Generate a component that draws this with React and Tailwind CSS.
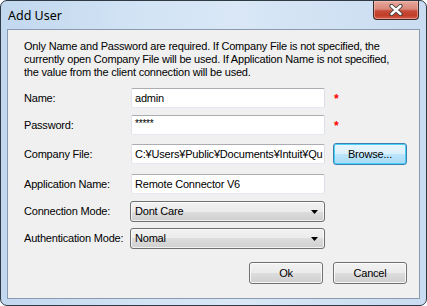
import React from "react";

const F = { fontFamily: '"Liberation Sans", Arial, sans-serif' };

function TextBox({ value, className = "" }) {
  return (
    <div
      className={
        "h-[20px] w-[194px] bg-white border border-[#abadb3] border-b-[#e3e9ef] border-l-[#e2e3ea] border-r-[#dbdfe6] rounded-[2px] flex items-center pl-[3px] overflow-hidden whitespace-nowrap text-[11px] text-black " +
        className
      }
    >
      {value}
    </div>
  );
}

function Combo({ value }) {
  return (
    <div className="h-[21px] w-[195px] ml-[-1px] rounded-[3px] border border-[#707070] bg-[linear-gradient(#f2f2f2_0%,#ebebeb_50%,#dddddd_50%,#cfcfcf_100%)] flex items-center pl-[4px] pr-[6px] text-[11px] text-black shadow-[inset_0_0_0_1px_rgba(255,255,255,0.7)]">
      <span className="flex-1">{value}</span>
      <svg width="7" height="4" viewBox="0 0 7 4">
        <path d="M0 0H7L3.5 4Z" fill="#000" />
      </svg>
    </div>
  );
}

function Btn({ children, focused = false, className = "" }) {
  return (
    <div
      className={
        "h-[22px] w-[74px] rounded-[3px] border flex items-center justify-center text-[11px] text-black " +
        (focused
          ? "border-[#3c7fb1] bg-[linear-gradient(#eaf6fd_0%,#d9f0fc_50%,#bee6fd_50%,#a7d9f5_100%)] shadow-[inset_0_0_0_1px_#48d0f7]"
          : "border-[#707070] bg-[linear-gradient(#f2f2f2_0%,#ebebeb_50%,#dddddd_50%,#cfcfcf_100%)] shadow-[inset_0_0_0_1px_rgba(255,255,255,0.8)]") +
        " " +
        className
      }
    >
      {children}
    </div>
  );
}

function Star() {
  return <span className="text-[#ff0000] text-[12px] font-bold leading-none ml-[9px] mt-[2px]">*</span>;
}

function Label({ children }) {
  return <div className="w-[107px] text-[11px] text-black">{children}</div>;
}

export default function App() {
  return (
    <div
      style={F}
      className="w-[427px] h-[306px] rounded-[7px] border border-[#2f3a45] bg-[linear-gradient(90deg,#c2d8ef_0%,#d3e4f5_35%,#d9e7f6_55%,#c9dcf1_100%)] flex flex-col overflow-hidden"
    >
      <div className="h-[28px] flex items-start shrink-0">
        <div className="pl-[7px] pt-[6px] text-[12.5px] text-black" style={{ fontFamily: '"Noto Sans", "Liberation Sans", sans-serif' }}>
          Add User
        </div>
        <div className="ml-auto mr-[7px] w-[46px] h-[19px] rounded-b-[4px] border border-t-0 border-[#3c2a2a] bg-[linear-gradient(#e7a99d_0%,#d9887a_45%,#c64b38_55%,#c23d2a_80%,#d4614b_100%)] flex items-center justify-center shadow-[inset_0_0_0_1px_rgba(255,200,190,0.5)]">
          <svg width="14" height="12" viewBox="0 0 14 12">
            <path d="M2.5 2L11.5 10M11.5 2L2.5 10" stroke="#3a3a3a" strokeWidth="4.2" strokeLinecap="round" />
            <path d="M2.5 2L11.5 10M11.5 2L2.5 10" stroke="#ffffff" strokeWidth="2.4" strokeLinecap="round" />
          </svg>
        </div>
      </div>
      <div className="mx-[6px] h-[270px] border border-[#8a9bb0] bg-[#f0f0f0] flex flex-col shrink-0 text-[11px] text-black tracking-[-0.2px]">
        <div className="mt-[10px] pl-[16px] pr-[20px] leading-[13px] h-[39px]">
          Only Name and Password are required. If Company File is not specified, the currently open Company File will be used. If Application Name is not specified, the value from the client connection will be used.
        </div>
        <div className="pl-[16px] flex flex-col">
          <div className="mt-[9px] flex items-center">
            <Label>Name:</Label>
            <TextBox value="admin" />
            <Star />
          </div>
          <div className="mt-[7px] flex items-center">
            <Label>Password:</Label>
            <TextBox value={<span className="text-[10px] mt-[-3px]">*****</span>} />
            <Star />
          </div>
          <div className="mt-[8px] flex items-center">
            <Label>Company File:</Label>
            <TextBox value="C:¥Users¥Public¥Documents¥Intuit¥Qu" />
            <Btn focused className="ml-[8px] w-[73px]">Browse...</Btn>
          </div>
          <div className="mt-[9px] flex items-center">
            <Label>Application Name:</Label>
            <TextBox value="Remote Connector V6" />
          </div>
          <div className="mt-[7px] flex items-center">
            <Label>Connection Mode:</Label>
            <Combo value="Dont Care" />
          </div>
          <div className="mt-[6px] flex items-center">
            <Label>Authentication Mode:</Label>
            <Combo value="Nomal" />
          </div>
          <div className="mt-[13px] flex justify-end pr-[12px] gap-[10px]">
            <Btn className="w-[73px]">Ok</Btn>
            <Btn className="w-[73px]">Cancel</Btn>
          </div>
        </div>
      </div>
    </div>
  );
}
